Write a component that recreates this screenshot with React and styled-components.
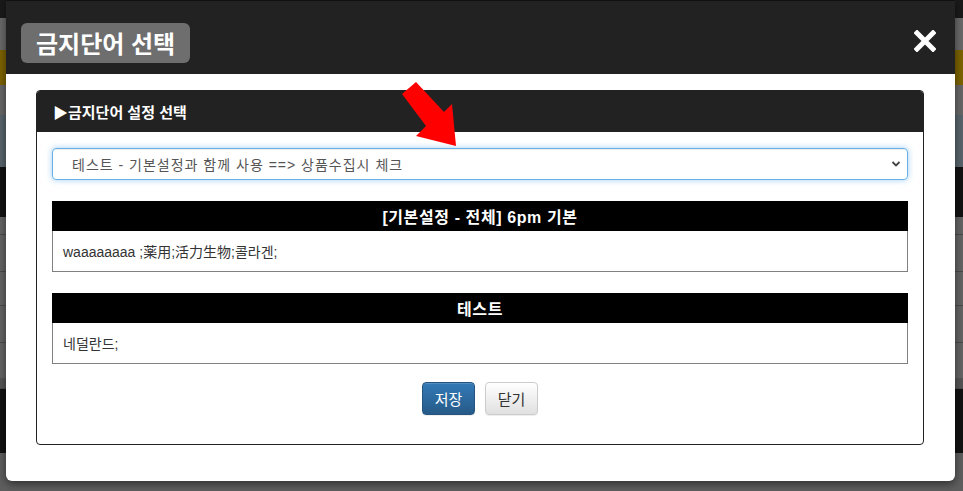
import React from 'react';
import styled, { createGlobalStyle } from 'styled-components';

const GlobalStyle = createGlobalStyle`
  html, body {
    margin: 0;
    padding: 0;
    width: 963px;
    height: 491px;
    overflow: hidden;
    font-family: "Liberation Sans", "Noto Sans CJK KR", sans-serif;
  }
`;

const Page = styled.div`
  position: relative;
  width: 963px;
  height: 491px;
  overflow: hidden;
  background: #5e5e5e;
  display: flex;
  flex-direction: column;
`;

const Band = styled.div`
  height: ${props => props.h}px;
  background: ${props => props.bg};
  border-bottom: ${props => (props.line ? '1px solid #4a4a4a' : 'none')};
  flex-shrink: 0;
`;

const BottomText = styled.div`
  display: flex;
  gap: 120px;
  padding: 2px 0 0 160px;
  font-size: 13px;
  color: #1e1e1e;
`;

const Modal = styled.div`
  position: absolute;
  left: 6px;
  top: 0;
  width: 949px;
  height: 481px;
  background: #fff;
  border-radius: 0 0 6px 6px;
  box-shadow: 0 3px 9px rgba(0, 0, 0, 0.5);
  display: flex;
  flex-direction: column;
  overflow: hidden;
`;

const Header = styled.div`
  height: 74px;
  background: #222;
  border-top: 1px solid #111;
  box-sizing: border-box;
  display: flex;
  align-items: center;
  justify-content: space-between;
  padding: 0 19px 0 15px;
`;

const TitleBadge = styled.div`
  background: #6e6e6e;
  border-radius: 6px;
  height: 40px;
  padding: 0 15px 0 15px;
  display: flex;
  align-items: center;
  color: #fff;
  font-size: 24px;
  font-weight: bold;
  margin-top: 10px;
`;

const CloseButton = styled.button`
  background: none;
  border: none;
  padding: 0;
  cursor: pointer;
  display: flex;
  margin-top: 6px;
`;

const Body = styled.div`
  flex: 1;
  padding: 16px 31px 36px 30px;
  display: flex;
  flex-direction: column;
`;

const Panel = styled.div`
  flex: 1;
  border: 1px solid #222;
  border-radius: 4px;
  display: flex;
  flex-direction: column;
  overflow: hidden;
`;

const PanelHeading = styled.div`
  height: 41px;
  background: #222;
  color: #fff;
  font-size: 15px;
  font-weight: bold;
  display: flex;
  align-items: center;
  padding-left: 16px;
`;

const PanelBody = styled.div`
  padding: 16px 15px 0 15px;
  display: flex;
  flex-direction: column;
  gap: 21px;
`;

const SelectBox = styled.div`
  height: 32px;
  box-sizing: border-box;
  border: 1px solid #66afe9;
  border-radius: 4px;
  box-shadow: inset 0 1px 1px rgba(0, 0, 0, 0.075), 0 0 6px rgba(102, 175, 233, 0.6);
  display: flex;
  align-items: center;
  justify-content: space-between;
  padding: 0 6px 0 19px;
  font-size: 14px;
  letter-spacing: 1px;
  color: #555;
`;

const WordTable = styled.div`
  display: flex;
  flex-direction: column;
`;

const TableHead = styled.div`
  height: 30px;
  background: #000;
  color: #fff;
  font-size: 16px;
  font-weight: bold;
  letter-spacing: 0.6px;
  display: flex;
  align-items: center;
  justify-content: center;
`;

const TableCell = styled.div`
  height: 41px;
  box-sizing: border-box;
  border: 1px solid #808080;
  border-top: none;
  display: flex;
  align-items: center;
  padding-left: 10px;
  font-size: 14px;
  color: #333;
`;

const ButtonRow = styled.div`
  display: flex;
  justify-content: center;
  gap: 10px;
  margin-top: -3px;
`;

const Button = styled.button`
  width: 53px;
  height: 33px;
  border-radius: 4px;
  font-family: inherit;
  font-size: 15px;
  cursor: pointer;
  border: 1px solid ${props => (props.primary ? '#245580' : '#ccc')};
  color: ${props => (props.primary ? '#fff' : '#333')};
  background: ${props =>
    props.primary
      ? 'linear-gradient(to bottom, #337ab7 0%, #265a88 100%)'
      : 'linear-gradient(to bottom, #fff 0%, #e0e0e0 100%)'};
  box-shadow: inset 0 1px 0 rgba(255, 255, 255, 0.15), 0 1px 1px rgba(0, 0, 0, 0.075);
`;

const Arrow = styled.svg`
  position: absolute;
  left: 398px;
  top: 80px;
`;

const bands = [
  { h: 18, bg: '#1a1a1a' },
  { h: 32, bg: '#6a6a6a' },
  { h: 35, bg: '#7d6400' },
  { h: 30, bg: '#676767' },
  { h: 52, bg: '#58646c' },
  { h: 50, bg: '#121212' },
  { h: 17, bg: '#646464', line: true },
  { h: 36, bg: '#646464', line: true },
  { h: 33, bg: '#646464', line: true },
  { h: 36, bg: '#646464', line: true },
  { h: 35, bg: '#646464' },
  { h: 10, bg: '#555', line: true },
  { h: 64, bg: '#121212' },
];

const tables = [
  { title: '[기본설정 - 전체] 6pm 기본', words: 'waaaaaaaa ;薬用;活力生物;콜라겐;' },
  { title: '테스트', words: '네덜란드;' },
];

const App = () => (
  <Page>
    <GlobalStyle />
    {bands.map((b, i) => (
      <Band key={i} h={b.h} bg={b.bg} line={b.line} />
    ))}
    <BottomText>
      <span>처리</span>
      <span>리리리배선리</span>
      <span>리래리소선리</span>
      <span>상품선택</span>
    </BottomText>

    <Modal>
      <Header>
        <TitleBadge>금지단어 선택</TitleBadge>
        <CloseButton>
          <svg width="22" height="22" viewBox="0 0 22 22">
            <path d="M3 3 L19 19 M19 3 L3 19" stroke="#fff" strokeWidth="5" strokeLinecap="square" />
          </svg>
        </CloseButton>
      </Header>
      <Body>
        <Panel>
          <PanelHeading>▶금지단어 설정 선택</PanelHeading>
          <PanelBody>
            <SelectBox>
              <span>테스트 - 기본설정과 함께 사용 ==&gt; 상품수집시 체크</span>
              <svg width="10" height="8" viewBox="0 0 10 8">
                <path d="M1.5 2 L5 5.5 L8.5 2" stroke="#444" strokeWidth="1.8" fill="none" />
              </svg>
            </SelectBox>
            {tables.map(t => (
              <WordTable key={t.title}>
                <TableHead>{t.title}</TableHead>
                <TableCell>{t.words}</TableCell>
              </WordTable>
            ))}
            <ButtonRow>
              <Button primary>저장</Button>
              <Button>닫기</Button>
            </ButtonRow>
          </PanelBody>
        </Panel>
      </Body>
    </Modal>

    <Arrow width="66" height="70" viewBox="0 0 66 70">
      <polygon points="4,14 18,2 46,32 54,24 58,66 18,56 28,46" fill="#ff0000" />
    </Arrow>
  </Page>
);

export default App;
